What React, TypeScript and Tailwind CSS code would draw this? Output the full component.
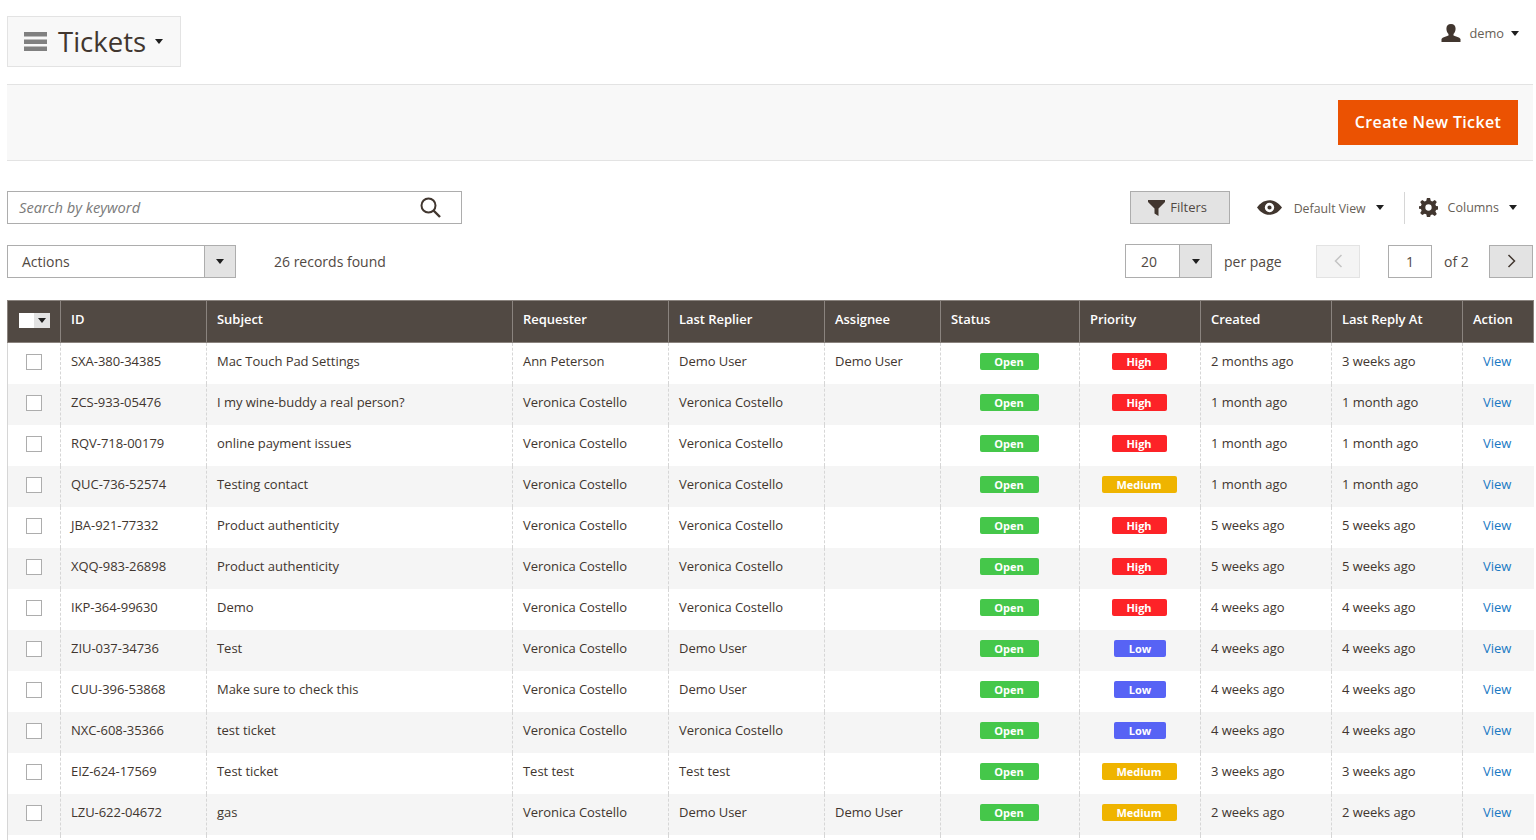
const rows: string[][] = [
  ["SXA-380-34385", "Mac Touch Pad Settings", "Ann Peterson", "Demo User", "Demo User", "High", "2 months ago", "3 weeks ago"],
  ["ZCS-933-05476", "I my wine-buddy a real person?", "Veronica Costello", "Veronica Costello", "", "High", "1 month ago", "1 month ago"],
  ["RQV-718-00179", "online payment issues", "Veronica Costello", "Veronica Costello", "", "High", "1 month ago", "1 month ago"],
  ["QUC-736-52574", "Testing contact", "Veronica Costello", "Veronica Costello", "", "Medium", "1 month ago", "1 month ago"],
  ["JBA-921-77332", "Product authenticity", "Veronica Costello", "Veronica Costello", "", "High", "5 weeks ago", "5 weeks ago"],
  ["XQQ-983-26898", "Product authenticity", "Veronica Costello", "Veronica Costello", "", "High", "5 weeks ago", "5 weeks ago"],
  ["IKP-364-99630", "Demo", "Veronica Costello", "Veronica Costello", "", "High", "4 weeks ago", "4 weeks ago"],
  ["ZIU-037-34736", "Test", "Veronica Costello", "Demo User", "", "Low", "4 weeks ago", "4 weeks ago"],
  ["CUU-396-53868", "Make sure to check this", "Veronica Costello", "Demo User", "", "Low", "4 weeks ago", "4 weeks ago"],
  ["NXC-608-35366", "test ticket", "Veronica Costello", "Veronica Costello", "", "Low", "4 weeks ago", "4 weeks ago"],
  ["EIZ-624-17569", "Test ticket", "Test test", "Test test", "", "Medium", "3 weeks ago", "3 weeks ago"],
  ["LZU-622-04672", "gas", "Veronica Costello", "Demo User", "Demo User", "Medium", "2 weeks ago", "2 weeks ago"],
];

const Caret = ({ className = "" }: { className?: string }) => (
  <span className={`inline-block h-0 w-0 border-x-[4px] border-t-[5px] border-x-transparent border-t-[#1f1f1f] ${className}`} />
);

const headers = ["ID", "Subject", "Requester", "Last Replier", "Assignee", "Status", "Priority", "Created", "Last Reply At", "Action"];
const widths = ["w-[53px]", "w-[146px]", "w-[306px]", "w-[156px]", "w-[156px]", "w-[116px]", "w-[139px]", "w-[121px]", "w-[131px]", "w-[131px]", "w-[71px]"];
const cell = "border-x border-dashed border-[#d6d6d6]";

function Priority({ p }: { p: string }) {
  if (p === "High") return <span className="inline-block w-[55px] rounded-[2px] bg-[#fd2327] text-center text-[11px] leading-[17px] font-bold text-white">High</span>;
  if (p === "Low") return <span className="ml-[2px] inline-block w-[52px] rounded-[2px] bg-[#5763f5] text-center text-[11px] leading-[17px] font-bold text-white">Low</span>;
  return <span className="inline-block w-[75px] rounded-[2px] bg-[#efb400] text-center text-[11px] leading-[17px] font-bold text-white">Medium</span>;
}

export default function App() {
  return (
    <div className="h-[840px] w-[1536px] overflow-hidden bg-white pr-[3px] pl-[7px] font-['Open_Sans',sans-serif] text-[13px] text-[#41362f]">
      <header className="flex h-[84px] items-start justify-between pt-4">
        <div className="flex h-[51px] w-[174px] items-center border border-[#e3e3e3] bg-[#f8f8f8] pl-4">
          <svg width="23" height="19" viewBox="0 0 23 19" className="text-[#808080]" fill="currentColor">
            <rect y="0" width="23" height="4.500" />
            <rect y="7.500" width="23" height="4.500" />
            <rect y="14.500" width="23" height="4.500" />
          </svg>
          <span className="ml-[11px] text-[27.500px] leading-none text-[#41362f]">Tickets</span>
          <Caret className="ml-[9px]" />
        </div>
        <div className="flex items-center pt-[8px] pr-[14px]">
          <svg width="20" height="18" viewBox="0 0 20 18" fill="#41362f">
            <path d="M10 0c3 0 4.600 2 4.600 4.800 0 2.200-.9 4.200-2.100 5.200v1.500c2.400 1 6 1.600 7 3.500v3H.5v-3c1-1.900 4.600-2.500 7-3.500V10C6.300 9 5.400 7 5.400 4.800 5.400 2 7 0 10 0z" />
          </svg>
          <span className="ml-[8px] text-[12.800px] leading-[18px] text-[#676056]">demo</span>
          <Caret className="ml-[7px]" />
        </div>
      </header>

      <div className="flex h-[77px] items-start justify-end border-y border-[#e3e3e3] bg-[#f8f8f8] pt-[15px] pr-[15px]">
        <button className="h-[45px] w-[180px] bg-[#eb5202] pb-[2px] text-[16px] font-semibold tracking-[0.35px] text-white">Create New Ticket</button>
      </div>

      <div className="mt-[30px] flex h-[33px] items-center">
        <div className="flex h-[33px] w-[455px] items-center justify-between border border-[#adadad] pr-[20px] pl-[11px]">
          <span className="text-[14.700px] text-[#7a7a7a] italic">Search by keyword</span>
          <svg width="21" height="21" viewBox="0 0 21 21" fill="none" stroke="#41362f" strokeWidth="2">
            <circle cx="8.500" cy="8.500" r="7" />
            <path d="M13.500 13.500 20 20" strokeWidth="2.400" />
          </svg>
        </div>
        <div className="ml-auto flex items-center pr-[16px]">
          <button className="flex h-[33px] w-[100px] items-center justify-center border border-[#adadad] bg-[#e3e3e3] pr-[4px] text-[13px] text-[#514943]">
            <svg width="17" height="16" viewBox="0 0 17 16" fill="#41362f" className="mr-[5px]">
              <path d="M0 0h17v2L10.500 8.500V16l-4-2.500V8.500L0 2z" />
            </svg>
            Filters
          </button>
          <svg width="25" height="15" viewBox="0 0 24 14" className="ml-[27px]" fill="#41362f">
            <path fillRule="evenodd" d="M12 0c5.500 0 9.500 3.500 12 7-2.500 3.500-6.500 7-12 7S2.500 10.500 0 7c2.500-3.500 6.500-7 12-7zm0 2.500a4.500 4.500 0 1 0 0 9 4.500 4.500 0 0 0 0-9zm0 2.500a2 2 0 1 1 0 4 2 2 0 0 1 0-4z" />
          </svg>
          <span className="ml-[12px] pt-[4px] text-[12.300px] text-[#676056]">Default View</span>
          <Caret className="ml-[10px]" />
          <div className="mr-[14px] ml-[20px] h-[32px] w-px bg-[#d6d6d6]" />
          <svg width="19" height="19" viewBox="0 0 24 24" fill="#41362f">
            <path fillRule="evenodd" d="M10 0h4l.8 3.500 2 .8L20 2.500 22.500 5 20.700 8l.8 2L24 10.500v4l-2.500.6-.8 2 1.800 3-2.500 2.500-3.200-1.800-2 .8L14 24h-4l-.8-3.400-2-.8L4 21.600 1.500 19l1.800-3-.8-2L0 13.500v-3l2.500-.5.8-2-1.800-3L4 2.500l3.200 1.800 2-.8zM12 8a4 4 0 1 0 0 8 4 4 0 0 0 0-8z" />
          </svg>
          <span className="ml-[10px] pt-[2px] text-[12.500px] text-[#676056]">Columns</span>
          <Caret className="ml-[10px]" />
        </div>
      </div>

      <div className="mt-[20px] flex h-[34px] items-center">
        <div className="flex h-[33px] w-[229px] items-stretch border border-[#adadad]">
          <span className="flex flex-1 items-center pl-[14px] text-[14px] text-[#514943]">Actions</span>
          <span className="flex w-[31px] items-center justify-center border-l border-[#adadad] bg-[#e3e3e3]"><Caret /></span>
        </div>
        <span className="ml-[38px] text-[14px] text-[#514943]">26 records found</span>
        <div className="ml-auto flex items-center">
          <div className="flex h-[34px] w-[87px] items-stretch border border-[#adadad]">
            <span className="flex flex-1 items-center pl-[15px] text-[14px] text-[#514943]">20</span>
            <span className="flex w-[32px] items-center justify-center border-l border-[#adadad] bg-[#e3e3e3]"><Caret /></span>
          </div>
          <span className="ml-[12px] w-[92px] text-[14px] text-[#514943]">per page</span>
          <span className="flex h-[33px] w-[44px] items-center justify-center border border-[#e3e3e3] bg-[#f4f4f4]">
            <svg width="9" height="14" viewBox="0 0 9 14" fill="none" stroke="#c4c4c4" strokeWidth="1.500"><path d="M7.500 1 1.500 7l6 6" /></svg>
          </span>
          <span className="ml-[28px] flex h-[33px] w-[44px] items-center justify-center border border-[#adadad] text-[14px] text-[#514943]">1</span>
          <span className="ml-[12px] w-[45px] text-[14px] text-[#514943]">of 2</span>
          <span className="flex h-[33px] w-[44px] items-center justify-center border border-[#adadad] bg-[#e3e3e3]">
            <svg width="9" height="14" viewBox="0 0 9 14" fill="none" stroke="#41362f" strokeWidth="1.500"><path d="M1.500 1l6 6-6 6" /></svg>
          </span>
        </div>
      </div>

      <table className="mt-[22px] w-[1526px] table-fixed border-collapse tracking-[-0.04px]">
        <colgroup>
          {widths.map((w, i) => <col key={i} className={w} />)}
        </colgroup>
        <thead>
          <tr className="h-[42px] bg-[#514943] text-left text-[13px] font-semibold text-white">
            <th className="border border-[#8a837e] p-0 pb-[3px]">
              <span className="mx-auto flex h-[15px] w-[31px]">
                <span className="w-[15px] bg-white" />
                <span className="flex flex-1 items-center justify-center bg-[#e3e3e3]"><Caret /></span>
              </span>
            </th>
            {headers.map((h) => (
              <th key={h} className="border border-[#8a837e] px-[10px] pb-[3px] font-semibold">{h}</th>
            ))}
          </tr>
        </thead>
        <tbody>
          {rows.map((r, i) => (
            <tr key={r[0]} className={`h-[41px] ${i % 2 ? "bg-[#f5f5f5]" : "bg-white"}`}>
              <td className="border-r border-l border-dashed border-r-[#d6d6d6] border-l-[#d6d6d6] p-0 pb-[3px] text-center [border-left-style:solid]">
                <span className="mx-auto block h-4 w-4 border border-[#adadad] bg-white" />
              </td>
              {r.slice(0, 5).map((c, j) => (
                <td key={j} className={`${cell} px-[10px] pb-[3px] whitespace-nowrap`}>{c}</td>
              ))}
              <td className={`${cell} p-0 pr-[2px] pb-[3px] text-center`}>
                <span className="inline-block w-[59px] rounded-[2px] bg-[#45c74a] text-center text-[11px] leading-[17px] font-bold text-white">Open</span>
              </td>
              <td className={`${cell} p-0 pr-[2px] pb-[3px] text-center`}>
                <Priority p={r[5]} />
              </td>
              <td className={`${cell} px-[10px] pb-[3px] whitespace-nowrap`}>{r[6]}</td>
              <td className={`${cell} px-[10px] pb-[3px] whitespace-nowrap`}>{r[7]}</td>
              <td className="border-l border-dashed border-[#d6d6d6] px-[20px] pb-[3px] text-[#1979c3]">View</td>
            </tr>
          ))}
          <tr className="h-[41px] bg-white">
            <td className="border-l border-[#d6d6d6]" />
            {widths.slice(1).map((w) => <td key={w + "x"} className="border-l border-dashed border-[#d6d6d6]" />)}
          </tr>
        </tbody>
      </table>
    </div>
  );
}
